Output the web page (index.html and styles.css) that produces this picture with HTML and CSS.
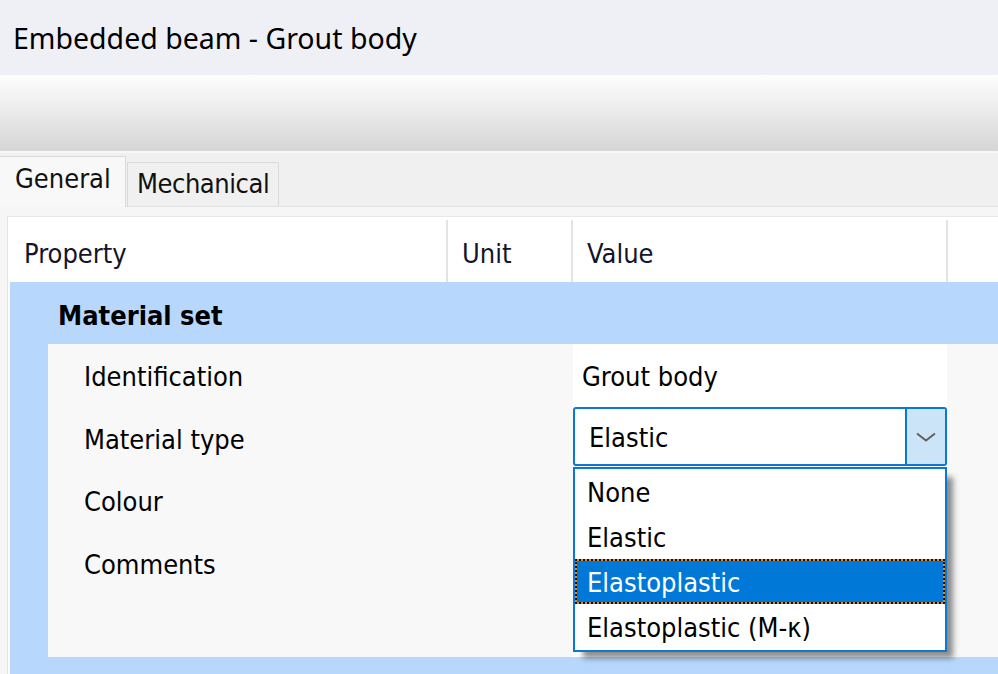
FILE: index.html
```html
<!DOCTYPE html>
<html lang="en">
<head>
<meta charset="utf-8">
<title>Embedded beam - Grout body</title>
<link rel="stylesheet" href="styles.css">
</head>
<body>
<div class="window">
  <header class="titlebar"><h1 class="title">Embedded beam - Grout body</h1></header>
  <div class="toolbar"></div>
  <nav class="tabstrip">
    <div class="tab tab-active">General</div>
    <div class="tab">Mechanical</div>
  </nav>
  <main class="panel">
    <section class="grid">
      <div class="grid-head">
        <div class="hcell h-prop">Property</div>
        <div class="hcell h-unit">Unit</div>
        <div class="hcell h-value">Value</div>
        <div class="hcell h-rest"></div>
      </div>
      <div class="group">
        <div class="group-title">Material set</div>
        <div class="group-body">
          <div class="row">
            <div class="cell c-label">Identification</div>
            <div class="cell c-unit"></div>
            <div class="cell c-val">Grout body</div>
          </div>
          <div class="row">
            <div class="cell c-label">Material type</div>
            <div class="cell c-unit"></div>
            <div class="cell c-val c-edit">
              <div class="combo">
                <div class="combo-text">Elastic</div>
                <div class="combo-btn">
                  <svg class="chev" width="20" height="10" viewBox="0 0 20 10"><path d="M1 1.5 L10 8.5 L19 1.5" fill="none" stroke="#606060" stroke-width="2"/></svg>
                </div>
                <ul class="dropdown">
                  <li class="opt">None</li>
                  <li class="opt">Elastic</li>
                  <li class="opt opt-sel">Elastoplastic</li>
                  <li class="opt">Elastoplastic (M-κ)</li>
                </ul>
              </div>
            </div>
          </div>
          <div class="row">
            <div class="cell c-label">Colour</div>
            <div class="cell c-unit"></div>
            <div class="cell c-val"></div>
          </div>
          <div class="row">
            <div class="cell c-label">Comments</div>
            <div class="cell c-unit"></div>
            <div class="cell c-val"></div>
          </div>
          <div class="row">
            <div class="cell c-label"></div>
            <div class="cell c-unit"></div>
            <div class="cell c-val"></div>
          </div>
        </div>
      </div>
    </section>
  </main>
</div>
</body>
</html>
```

FILE: styles.css
```css
* { box-sizing: border-box; }
html, body {
  margin: 0;
  padding: 0;
  width: 998px;
  height: 674px;
  overflow: hidden;
  background: #f7f7f7;
}
.window {
  width: 998px;
  height: 674px;
  overflow: hidden;
  font-family: "DejaVu Sans Condensed", "DejaVu Sans", sans-serif;
  font-stretch: condensed;
  font-size: 27px;
  color: #111;
}
.titlebar {
  height: 75px;
  background: #eff0f6;
  display: flex;
  align-items: center;
  padding-left: 13px;
}
.title {
  margin: 0;
  font-family: "Noto Sans", "Open Sans", sans-serif;
  font-stretch: normal;
  font-weight: 400;
  font-size: 28.5px;
  color: #000;
}
.toolbar {
  height: 76px;
  background: linear-gradient(#fefefe, #d5d5d5);
}
.tabstrip {
  height: 55px;
  border-top: 2px solid #f7f7f7;
  background: #f0f0f0;
  display: flex;
  align-items: flex-end;
  position: relative;
  z-index: 2;
}
.tab {
  height: 44px;
  padding: 7px 9px 0 9px;
  background: #f0f0f0;
  border: 1px solid #dadada;
  border-bottom: none;
  margin-left: 1px;
  line-height: 1;
  letter-spacing: -0.45px;
}
.tab-active {
  height: 51px;
  margin-bottom: -1px;
  margin-left: 0;
  padding: 8px 14px 0 15px;
  width: 126px;
  border-left: none;
  background: #f8f8f8;
  letter-spacing: 0;
}
.panel {
  height: 468px;
  border-top: 1px solid #e0e0e0;
  background: #f6f6f6;
  padding: 9px 0 0 7px;
}
.grid {
  height: 100%;
  border-top: 1px solid #e8e8e8;
  border-left: 1px solid #e4e4e4;
  background: #ffffff;
}
.grid-head {
  display: flex;
  height: 65px;
  padding-top: 3px;
  background: #fff;
}
.hcell {
  height: 62px;
  display: flex;
  align-items: center;
  padding-top: 5px;
  border-right: 2px solid #e3e3e3;
  color: #14142a;
}
.h-prop { width: 440px; padding-left: 16px; }
.h-unit { width: 125px; padding-left: 14px; }
.h-value { width: 375px; padding-left: 14px; }
.h-rest { flex: 1; border-right: none; }

.group {
  margin-left: 2px;
  background: #b7d8fc;
  padding-bottom: 40px;
}
.group-title {
  height: 62px;
  display: flex;
  align-items: center;
  padding-left: 48px;
  padding-top: 4px;
  font-weight: 700;
  color: #000;
}
.group-body {
  margin-left: 38px;
  background: #f8f8f8;
}
.row {
  display: flex;
  height: 62.5px;
}
.cell {
  display: flex;
  align-items: center;
  padding-top: 3px;
  color: #000;
}
.c-label { width: 399px; padding-left: 36px; }
.c-unit { width: 126px; }
.c-val { width: 374px; background: #fff; padding-left: 9px; }
.c-edit {
  padding: 0;
  align-items: flex-start;
  position: relative;
  z-index: 3;
}
.combo {
  position: relative;
  width: 374px;
  height: 59px;
  margin-top: 0.5px;
  border: 2px solid #0a78d4;
  border-radius: 3px;
  background: #fff;
  display: flex;
}
.combo-text {
  flex: 1;
  display: flex;
  align-items: center;
  padding-left: 14px;
  padding-top: 2px;
}
.combo-btn {
  width: 40px;
  border-left: 2px solid #0a78d4;
  background: #cce4f7;
  display: flex;
  align-items: center;
  justify-content: center;
  border-radius: 0 1px 1px 0;
}
.chev { display: block; }
.dropdown {
  position: absolute;
  left: -2px;
  top: 58px;
  width: 374px;
  margin: 0;
  padding: 0 0 1px 0;
  list-style: none;
  background: #fff;
  border: 2px solid #0a78d4;
  box-shadow: 8px 8px 6px -2px rgba(0, 0, 0, 0.45);
}
.opt {
  height: 45px;
  display: flex;
  align-items: center;
  padding-left: 12px;
  padding-top: 2px;
  color: #000;
}
.opt-sel {
  background: #0078d7;
  color: #fff;
  box-shadow: inset 0 0 0 2px #d9892e;
  outline: 2px dotted #141008;
  outline-offset: -2px;
}
```
